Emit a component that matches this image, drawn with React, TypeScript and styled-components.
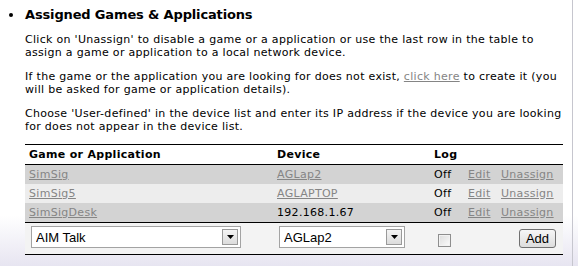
import styled, { createGlobalStyle } from 'styled-components';

const GlobalStyle = createGlobalStyle`
  html, body {
    margin: 0;
    padding: 0;
  }
  body {
    min-height: 266px;
    background: linear-gradient(180deg, #ffffff 0px, #ffffff 215px, #e7e5f1 266px);
    font-family: "DejaVu Sans", Verdana, sans-serif;
    color: #000;
  }
`;

const Panel = styled.div`
  width: 573px;
  min-height: 266px;
  border-right: 1px solid #c6c6ce;
  box-sizing: border-box;
  padding-top: 6px;
`;

const Section = styled.section`
  display: flex;
`;

const BulletCol = styled.div`
  width: 25px;
  flex: none;
`;

const Bullet = styled.span`
  display: block;
  width: 4px;
  height: 4px;
  margin: 7px 0 0 9px;
  border-radius: 50%;
  background: #000;
`;

const Content = styled.div`
  width: 538px;
`;

const Title = styled.h2`
  margin: 0 0 10px;
  font-size: 13px;
  line-height: 17px;
  letter-spacing: -0.15px;
  font-weight: bold;
`;

const Para = styled.p`
  margin: 0 0 11px;
  font-size: 11px;
  line-height: 13px;
  letter-spacing: 0.3px;
`;

const TextLink = styled.a`
  color: #858585;
  text-decoration: underline;
  cursor: pointer;
`;

const Table = styled.table`
  width: 538px;
  table-layout: fixed;
  border-collapse: collapse;
  border-top: 1px solid #000;
  border-bottom: 1px solid #000;
  font-size: 11px;
  letter-spacing: 0.3px;
`;

const HeadCell = styled.th`
  height: 19px;
  padding: 0 4px;
  text-align: left;
  font-weight: bold;
  line-height: 19px;
  border-bottom: 1px solid #000;
`;

const Row = styled.tr<{ $alt?: boolean }>`
  background: ${p => (p.$alt ? '#ededed' : '#d3d3d3')};
`;

const Cell = styled.td`
  height: 19px;
  padding: 0 4px;
  line-height: 19px;
  white-space: nowrap;
`;

const FormRow = styled.tr`
  background: #f3f3f3;
  border-top: 1px solid #000;
`;

const FormCell = styled.td<{ $right?: boolean }>`
  height: 32px;
  padding: 0 6px;
  vertical-align: top;
  text-align: ${p => (p.$right ? 'right' : 'left')};
  box-sizing: border-box;
  letter-spacing: 0;
`;

const SelectBox = styled.div<{ $w: number }>`
  display: flex;
  width: ${p => p.$w}px;
  height: 22px;
  margin-top: 3px;
  box-sizing: border-box;
  border: 1px solid #a3a3a3;
  background: #fff;
`;

const NativeSelect = styled.select`
  flex: 1;
  min-width: 0;
  appearance: none;
  border: none;
  outline: none;
  background: transparent;
  padding: 0 0 0 4px;
  font-family: "Liberation Sans", Arial, sans-serif;
  font-size: 13px;
  color: #000;
`;

const ArrowBtn = styled.span`
  width: 16px;
  height: 16px;
  margin: 2px 2px 0 0;
  box-sizing: border-box;
  border: 1px solid #9a9a9a;
  background: linear-gradient(#f4f4f4, #dcdcdc);
  display: flex;
  align-items: center;
  justify-content: center;
`;

const Check = styled.input`
  appearance: none;
  display: block;
  width: 13px;
  height: 13px;
  margin: 11px 0 0 2px;
  box-sizing: border-box;
  border: 1px solid #8e8e8e;
  background: linear-gradient(135deg, #dcdcdc, #fbfbfb);
  box-shadow: inset 0 0 0 1px #f2f2f2;
`;

const AddButton = styled.button`
  height: 19px;
  width: 37px;
  margin: 6px 1px 0 0;
  padding: 0;
  border: 1px solid #707070;
  border-radius: 3px;
  background: linear-gradient(#f6f6f6, #dddddd);
  font-family: "Liberation Sans", Arial, sans-serif;
  font-size: 13px;
  color: #000;
`;

const Arrow = () => (
  <svg width="7" height="4" viewBox="0 0 7 4">
    <path d="M0 0h7L3.5 4z" fill="#000" />
  </svg>
);

const Dropdown = ({ width, value }: { width: number; value: string }) => (
  <SelectBox $w={width}>
    <NativeSelect defaultValue={value}>
      <option>{value}</option>
    </NativeSelect>
    <ArrowBtn>
      <Arrow />
    </ArrowBtn>
  </SelectBox>
);

const rows = [
  { app: 'SimSig', device: 'AGLap2', linked: true },
  { app: 'SimSig5', device: 'AGLAPTOP', linked: true },
  { app: 'SimSigDesk', device: '192.168.1.67', linked: false },
];

export default function App() {
  return (
    <>
      <GlobalStyle />
      <Panel>
        <Section>
          <BulletCol>
            <Bullet />
          </BulletCol>
          <Content>
            <Title>Assigned Games &amp; Applications</Title>
            <Para>
              Click on 'Unassign' to disable a game or a application or use the last row in the table to
              assign a game or application to a local network device.
            </Para>
            <Para>
              If the game or the application you are looking for does not exist, <TextLink>click here</TextLink> to
              create it (you will be asked for game or application details).
            </Para>
            <Para>
              Choose 'User-defined' in the device list and enter its IP address if the device you are looking
              for does not appear in the device list.
            </Para>
            <Table>
              <colgroup>
                <col style={{ width: 248 }} />
                <col style={{ width: 157 }} />
                <col style={{ width: 34 }} />
                <col style={{ width: 33 }} />
                <col style={{ width: 66 }} />
              </colgroup>
              <thead>
                <tr>
                  <HeadCell>Game or Application</HeadCell>
                  <HeadCell>Device</HeadCell>
                  <HeadCell>Log</HeadCell>
                  <HeadCell />
                  <HeadCell />
                </tr>
              </thead>
              <tbody>
                {rows.map((r, i) => (
                  <Row key={r.app} $alt={i === 1}>
                    <Cell>
                      <TextLink>{r.app}</TextLink>
                    </Cell>
                    <Cell>{r.linked ? <TextLink>{r.device}</TextLink> : r.device}</Cell>
                    <Cell>Off</Cell>
                    <Cell>
                      <TextLink>Edit</TextLink>
                    </Cell>
                    <Cell>
                      <TextLink>Unassign</TextLink>
                    </Cell>
                  </Row>
                ))}
                <FormRow>
                  <FormCell>
                    <Dropdown width={210} value="AIM Talk" />
                  </FormCell>
                  <FormCell>
                    <Dropdown width={126} value="AGLap2" />
                  </FormCell>
                  <FormCell>
                    <Check type="checkbox" />
                  </FormCell>
                  <FormCell colSpan={2} $right>
                    <AddButton>Add</AddButton>
                  </FormCell>
                </FormRow>
              </tbody>
            </Table>
          </Content>
        </Section>
      </Panel>
    </>
  );
}
